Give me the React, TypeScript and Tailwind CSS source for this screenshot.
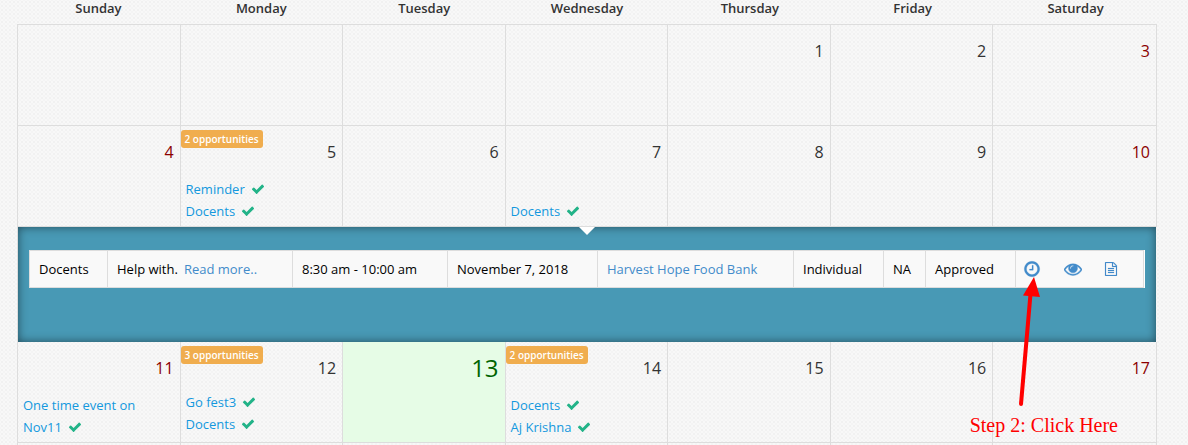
import React from "react";

interface CalendarEvent {
    lines: string[];
}

interface Day {
    date?: number;
    badge?: string;
    today?: boolean;
    raised?: boolean;
    events?: CalendarEvent[];
}

const weekdays = ["Sunday", "Monday", "Tuesday", "Wednesday", "Thursday", "Friday", "Saturday"];

const firstWeek: Day[] = [{}, {}, {}, {}, { date: 1 }, { date: 2 }, { date: 3 }];

const secondWeek: Day[] = [
    { date: 4 },
    { date: 5, badge: "2 opportunities", events: [{ lines: ["Reminder"] }, { lines: ["Docents"] }] },
    { date: 6 },
    { date: 7, events: [{ lines: ["Docents"] }] },
    { date: 8 },
    { date: 9 },
    { date: 10 },
];

const thirdWeek: Day[] = [
    { date: 11, events: [{ lines: ["One time event on", "Nov11"] }] },
    { date: 12, badge: "3 opportunities", raised: true, events: [{ lines: ["Go fest3"] }, { lines: ["Docents"] }] },
    { date: 13, today: true },
    { date: 14, badge: "2 opportunities", events: [{ lines: ["Docents"] }, { lines: ["Aj Krishna"] }] },
    { date: 15 },
    { date: 16 },
    { date: 17 },
];

const emptyWeek: Day[] = [{}, {}, {}, {}, {}, {}, {}];

function Icon({ d, className }: { d: string; className: string }) {
    return (
        <svg className={className} viewBox="0 0 1792 1792" fill="currentColor" stroke="currentColor" aria-hidden="true">
            <path d={d} />
        </svg>
    );
}

const checkPath =
    "M1671 566q0 40-28 68l-724 724-136 136q-28 28-68 28t-68-28l-136-136-362-362q-28-28-28-68t28-68l136-136q28-28 68-28t68 28l294 295 656-657q28-28 68-28t68 28l136 136q28 28 28 68z";
const clockPath =
    "M1024 544v448q0 14-9 23t-23 9h-320q-14 0-23-9t-9-23v-64q0-14 9-23t23-9h224v-352q0-14 9-23t23-9h64q14 0 23 9t9 23zm416 352q0-148-73-273t-198-198-273-73-273 73-198 198-73 273 73 273 198 198 273 73 273-73 198-198 73-273zm224 0q0 209-103 385.5t-279.5 279.5-385.5 103-385.5-103-279.5-279.5-103-385.5 103-385.5 279.5-279.5 385.5-103 385.5 103 279.5 279.5 103 385.5z";
const eyePath =
    "M1664 960q-152-236-381-353 61 104 61 225 0 185-131.5 316.5t-316.5 131.5-316.5-131.5-131.5-316.5q0-121 61-225-229 117-381 353 133 205 333.5 326.5t434.5 121.5 434.5-121.5 333.5-326.5zm-720-384q0-20-14-34t-34-14q-125 0-214.5 89.5t-89.5 214.5q0 20 14 34t34 14 34-14 14-34q0-86 61-147t147-61q20 0 34-14t14-34zm848 384q0 34-20 69-140 230-376.5 368.5t-499.5 138.5-499.5-139-376.5-368q-20-35-20-69t20-69q140-229 376.5-368t499.5-139 499.5 139 376.5 368q20 35 20 69z";
const filePath =
    "M1596 380q28 28 48 76t20 88v1152q0 40-28 68t-68 28h-1344q-40 0-68-28t-28-68v-1600q0-40 28-68t68-28h896q40 0 88 20t76 48zm-444-244v376h376q-10-29-22-41l-313-313q-12-12-41-22zm384 1528v-1024h-416q-40 0-68-28t-28-68v-416h-768v1536h1280zm-1024-864q0-14 9-23t23-9h704q14 0 23 9t9 23v64q0 14-9 23t-23 9h-704q-14 0-23-9t-9-23v-64zm736 224q14 0 23 9t9 23v64q0 14-9 23t-23 9h-704q-14 0-23-9t-9-23v-64q0-14 9-23t23-9h704zm0 256q14 0 23 9t9 23v64q0 14-9 23t-23 9h-704q-14 0-23-9t-9-23v-64q0-14 9-23t23-9h704z";

function DayCell({ day, weekend }: { day: Day; weekend: boolean }) {
    let dateColor = weekend ? "text-[#8b0000]" : "text-[#333]";
    if (day.today) dateColor = "text-[#006400]";

    return (
        <div className={`flex flex-col justify-between border-r border-b border-[#ddd] ${day.today ? "bg-[#e6fce6]" : ""}`}>
            <div className="flex items-start">
                {day.badge && (
                    <span className="mt-1 rounded-[3px] bg-[#f0ad4e] px-1 text-[10px] leading-[18px] font-semibold text-white">
                        {day.badge}
                    </span>
                )}
                {day.date && (
                    <span className={`mt-[14px] ml-auto pr-[6px] leading-6 ${day.today ? "text-2xl" : "text-base"} ${dateColor}`}>
                        {day.date}
                    </span>
                )}
            </div>
            {day.events && (
                <div className={`pl-[5px] text-[13px] leading-[22px] ${day.raised ? "pb-[7px]" : "pb-1"}`}>
                    {day.events.map((event) => (
                        <a key={event.lines[0]} href="#" className="block text-[#1398de]">
                            {event.lines.map((line, i) => (
                                <span key={line} className="flex items-center">
                                    {line}
                                    {i === event.lines.length - 1 && (
                                        <Icon d={checkPath} className="ml-[6px] h-[14px] w-[14px] text-[#22b388]" />
                                    )}
                                </span>
                            ))}
                        </a>
                    ))}
                </div>
            )}
        </div>
    );
}

function Week({ days, className }: { days: Day[]; className: string }) {
    return (
        <div className={`grid grid-cols-[repeat(6,14.27%)_1fr] ${className}`}>
            {days.map((day, i) => (
                <DayCell key={i} day={day} weekend={i === 0 || i === 6} />
            ))}
        </div>
    );
}

function DetailPanel() {
    return (
        <div className="relative mr-px bg-[#4899b5] px-[11px] pt-[23px] pb-[54px] shadow-[inset_0_0_10px_rgba(0,0,0,0.5)]">
            <svg className="absolute top-0 left-1/2 h-2 w-4 -translate-x-1/2" viewBox="0 0 16 8" aria-hidden="true">
                <path d="M0 0h16L8 8z" fill="#fff" />
            </svg>
            <div className="bg-white pr-px">
                <table className="w-full table-fixed border-collapse bg-[#f9f9f9] text-[13px] leading-5 text-black [&_td]:h-[37px] [&_td]:border [&_td]:border-[#ddd] [&_td]:px-[9px] [&_td]:whitespace-nowrap">
                    <tbody>
                        <tr>
                            <td className="w-[78px]">Docents</td>
                            <td className="w-[185px]">
                                Help with.
                                <a href="#" className="ml-[6px] text-[#428bca]">Read more..</a>
                            </td>
                            <td className="w-[155px]">8:30 am - 10:00 am</td>
                            <td className="w-[150px]">November 7, 2018</td>
                            <td className="w-[196px]">
                                <a href="#" className="text-[#428bca]">Harvest Hope Food Bank</a>
                            </td>
                            <td className="w-[90px]">Individual</td>
                            <td className="w-[42px]">NA</td>
                            <td className="w-[90px]">Approved</td>
                            <td>
                                <div className="flex items-center gap-[23px] text-[#428bca]">
                                    <button type="button" aria-label="Log hours" className="-ml-[2px]">
                                        <Icon d={clockPath} className="h-[18px] w-[18px] stroke-[20]" />
                                    </button>
                                    <button type="button" aria-label="View">
                                        <Icon d={eyePath} className="h-[18px] w-[18px] stroke-[40]" />
                                    </button>
                                    <button type="button" aria-label="Notes" className="-ml-px">
                                        <Icon d={filePath} className="h-[14px] w-[14px] stroke-[20]" />
                                    </button>
                                </div>
                            </td>
                        </tr>
                    </tbody>
                </table>
            </div>
        </div>
    );
}

function StepCallout() {
    return (
        <div className="pointer-events-none absolute top-[277px] right-[70px] flex flex-col text-[#f00]">
            <svg className="ml-[46px] h-[130px] w-[30px]" viewBox="0 0 30 130" aria-hidden="true">
                <path d="M5 127L14.500 17" stroke="currentColor" strokeWidth="4" strokeLinecap="round" />
                <path d="M18 0L7 18.500L24 20z" fill="currentColor" />
            </svg>
            <p className="mt-[6px] font-['Liberation_Serif',serif] text-xl leading-6 whitespace-nowrap">Step 2: Click Here</p>
        </div>
    );
}

export default function App() {
    return (
        <div className="relative flex min-h-screen flex-col bg-[#f8f8f8] bg-[radial-gradient(#f1f1f1_1px,transparent_1px),radial-gradient(#f4f4f4_1px,transparent_1px)] bg-[size:4px_4px,4px_4px] bg-[position:0_0,2px_2px] pr-[31px] pl-[17px] font-['Open_Sans',sans-serif]">
            <div className="grid grid-cols-7 pb-2 text-center text-[13px] leading-4 font-semibold text-[#333]">
                {weekdays.map((name) => (
                    <div key={name}>{name}</div>
                ))}
            </div>
            <div className="flex flex-1 flex-col border-t border-l border-[#ddd]">
                <Week days={firstWeek} className="min-h-[101px]" />
                <Week days={secondWeek} className="min-h-[101px]" />
                <DetailPanel />
                <Week days={thirdWeek} className="min-h-[101px]" />
                <Week days={emptyWeek} className="-mb-px flex-1" />
            </div>
            <StepCallout />
        </div>
    );
}
